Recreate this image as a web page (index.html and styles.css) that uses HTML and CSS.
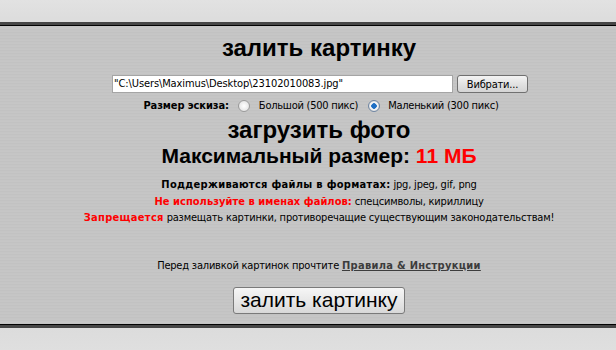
FILE: index.html
```html
<!DOCTYPE html>
<html>
<head>
<meta charset="utf-8">
<link rel="stylesheet" href="styles.css">
</head>
<body>
<div class="topband"></div>
<div class="panel">
  <h1 class="title">залить картинку</h1>
  <div class="filerow">
    <div class="fileinput">"C:\Users\Maximus\Desktop\23102010083.jpg"</div>
    <button class="browse">Вибрати...</button>
  </div>
  <div class="sizerow">
    <b class="lbl">Размер эскиза:</b>
    <span class="radio"></span><span class="opt">Большой (500 пикс)</span>
    <span class="radio on"></span><span class="opt">Маленький (300 пикс)</span>
  </div>
  <h2 class="sub">загрузить фото</h2>
  <div class="maxsize">Максимальный размер: <span class="red">11 МБ</span></div>
  <div class="info">
    <p><b>Поддерживаются файлы в форматах:</b> jpg, jpeg, gif, png</p>
    <p><b class="red tight">Не используйте в именах файлов:</b> спецсимволы, кириллицу</p>
    <p><b class="red">Запрещается</b> размещать картинки, противоречащие существующим законодательствам!</p>
  </div>
  <p class="rules">Перед заливкой картинок прочтите <a class="rlink">Правила &amp; Инструкции</a></p>
  <div class="submitwrap"><button class="submit">залить картинку</button></div>
</div>
<div class="bottomband"></div>
</body>
</html>
```
FILE: styles.css
```css
html, body { margin: 0; padding: 0; }
body {
  width: 616px; height: 350px; overflow: hidden;
  background: #dfdfdf;
  font-family: "DejaVu Sans Condensed", "DejaVu Sans", Verdana, sans-serif;
  font-stretch: condensed;
  color: #000;
}
.topband { height: 22px; background: linear-gradient(#e2e2e2, #dcdcdc); }
.panel {
  border-top: 3px solid #454545;
  border-bottom: 3px solid #454545;
  box-shadow: inset 0 1px 0 #000, inset 0 -1px 0 #000;
  background-color: #c4c4c4;
  background-image: repeating-linear-gradient(#c6c6c6 0 1px, #c2c2c2 1px 2px, #c5c5c5 2px 3px);
  height: 300px;
  box-sizing: content-box;
  display: flex; flex-direction: column; align-items: center;
  padding-left: 22px;
}
.bottomband { height: 30px; background: linear-gradient(#dcdcdc, #e0e0e0); }
.title {
  margin: 9px 0 0; font: bold 24px "Liberation Sans", Arial, sans-serif; height: 28px; line-height: 28px;
}
.filerow { display: flex; gap: 4px; margin-top: 13px; margin-left: 2px; }
.fileinput {
  width: 338px; height: 16px; background: #fff; border: 1px solid #a5a5a5;
  font-size: 11px; line-height: 16px; padding-left: 1px;
  letter-spacing: -0.1px;
}
.browse {
  width: 71px; height: 18px; padding: 0; margin: 0;
  font-family: inherit; font-stretch: condensed; font-size: 11px; letter-spacing: -0.2px;
  border: 1px solid #707070; border-radius: 3px;
  background: linear-gradient(#f4f4f4, #e2e2e2 50%, #d4d4d4);
  color: #000;
}
.sizerow { display: flex; align-items: center; height: 20px; font-size: 11px; margin-top: 2px; margin-left: 4px; }
.lbl { font-weight: bold; margin-right: 9px; letter-spacing: -0.1px; }
.opt { margin-right: 10px; letter-spacing: -0.25px; }
.opt:last-child { margin-right: 0; }
.radio {
  width: 12px; height: 12px; border-radius: 50%;
  border: 1px solid #9a9a9a; background: radial-gradient(#fff, #dcdcdc);
  margin-right: 9px; box-sizing: border-box; position: relative; top: 1px;
}
.radio.on { background: radial-gradient(circle, #1f6fc4 0 2.5px, #f4f4f4 3px 4px, #d8d8d8 5px); border-color: #6f86a3; margin-right: 8px; }
.sub { margin: 3px 0 0; font: bold 24px "Liberation Sans", Arial, sans-serif; height: 24px; line-height: 24px; }
.maxsize { margin-top: 2px; font: bold 21px "Liberation Sans", Arial, sans-serif; height: 24px; line-height: 24px; }
.red { color: #f00; }
.info { margin-top: 9px; text-align: center; font-size: 11px; }
.info p { margin: 0; height: 16.5px; line-height: 16.5px; letter-spacing: -0.2px; }
.info b { letter-spacing: 0.3px; }
.info b.tight { letter-spacing: 0.05px; }
.rules { margin: 31px 0 0; font-size: 11px; letter-spacing: -0.2px; height: 16px; line-height: 16px; }
.rlink { color: #3c3c3c; font-weight: bold; text-decoration: underline; letter-spacing: 0.3px; }
.submitwrap { margin-top: 13px; }
.submit {
  width: 172px; height: 27px; padding: 0 0 2px;
  font: 21px "Liberation Sans", Arial, sans-serif; color: #000;
  border: 1px solid #7a7a7a; border-radius: 3px;
  background: linear-gradient(#f6f6f6, #e8e8e8 50%, #d8d8d8);
}
```
